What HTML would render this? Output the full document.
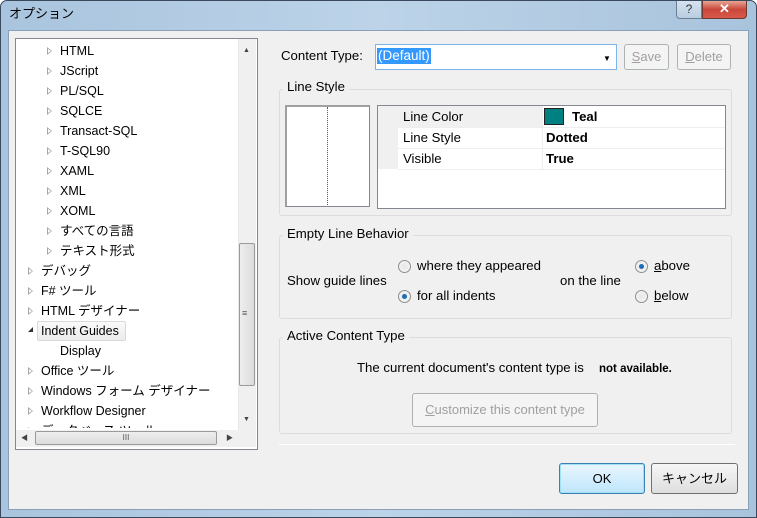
<!DOCTYPE html>
<html><head><meta charset="utf-8"><style>
*{box-sizing:border-box;margin:0;padding:0}
body{width:757px;height:518px;overflow:hidden;background:#fff;font-family:"Liberation Sans","Noto Sans CJK JP",sans-serif;font-size:12px;color:#000;position:relative}
.a{position:absolute}
.frame{left:0;top:0;width:757px;height:518px;border:1px solid #3a4a5c;border-radius:7px 7px 0 0;background:linear-gradient(90deg,#a9c4de,#bcd3e8 50%,#a8c3dc)}
.client{left:8px;top:30px;width:741px;height:480px;background:#f0f0f0;border:1px solid #8aa0b8}
.t{white-space:nowrap;line-height:14px}
.r{font-size:13.2px}
.grp{border:1px solid #dcdcdc;border-radius:3px}
.lbl{background:#f0f0f0;padding:0 4px}
.btn{border:1px solid #707070;border-radius:3px;background:linear-gradient(#f6f6f6,#dedede);text-align:center;font-size:13px}
.dis{border:1px solid #adb2b5;border-radius:3px;background:#f4f4f4;color:#a0a0a0;text-align:center;font-size:13px}
.rad{width:13px;height:13px;border-radius:50%;border:1px solid #8e8f8f;background:radial-gradient(#e6e6e6,#f8f8f8)}
.rad.on::after{content:"";position:absolute;left:3px;top:3px;width:5px;height:5px;border-radius:50%;background:#1d6db5}
</style></head><body>
<div class="a frame"></div>
<div class="a t" style="left:9px;top:7px;font-size:13px">オプション</div>
<div class="a" style="left:676px;top:1px;width:26px;height:18px;border:1px solid #6b7f95;border-top:0;border-radius:0 0 0 4px;background:linear-gradient(#d6e3f0,#b9cde2);text-align:center;font-size:12px;color:#333;line-height:16px">?</div>
<div class="a" style="left:702px;top:1px;width:45px;height:18px;border:1px solid #6b3a30;border-top:0;border-radius:0 0 4px 0;background:linear-gradient(#e8a595,#c8473a 50%,#d8594a);text-align:center;color:#fff;font-weight:bold;font-size:13px;line-height:16px">✕</div>
<div class="a client"></div>

<!-- tree -->
<div class="a" style="left:15px;top:38px;width:243px;height:412px;border:1px solid #828790;background:#fff"></div>
<div id="tree"></div>
<div class="a" style="left:238px;top:39px;width:18px;height:391px;background:#f0f0f0;border-left:1px solid #e8e8e8"></div>
<div class="a" style="left:239px;top:243px;width:16px;height:143px;border:1px solid #9a9a9a;border-radius:2px;background:linear-gradient(90deg,#eee,#dcdcdc)"></div>
<div class="a t" style="left:242px;top:306px;font-size:9px;color:#555">≡</div>
<div class="a t" style="left:243px;top:44px;font-size:7px;color:#444">▲</div>
<div class="a t" style="left:243px;top:413px;font-size:7px;color:#444">▼</div>

<!-- content type -->
<div class="a t r" style="left:281px;top:49px">Content Type:</div>
<div class="a" style="left:375px;top:44px;width:242px;height:26px;border:1px solid #7eb4ea;background:#fff"></div>
<div class="a t" style="left:377px;top:48px;background:#3399ff;color:#fff;padding:0 1px;font-size:13.5px;line-height:16px">(Default)</div>
<div class="a t" style="left:603px;top:52px;font-size:8px">▼</div>
<div class="a dis" style="left:624px;top:44px;width:45px;height:26px;line-height:24px"><u>S</u>ave</div>
<div class="a dis" style="left:677px;top:44px;width:54px;height:26px;line-height:24px"><u>D</u>elete</div>

<!-- line style -->
<div class="a grp" style="left:279px;top:89px;width:453px;height:127px"></div>
<div class="a t lbl r" style="left:283px;top:80px">Line Style</div>
<div class="a" style="left:285px;top:105px;width:85px;height:102px;border:1px solid #828790;border-top:2px solid #a0a0a0;border-left:2px solid #a0a0a0;background:#fff"></div>
<div class="a" style="left:327px;top:107px;width:0;height:98px;border-left:1px dotted #008080"></div>
<div class="a" style="left:377px;top:105px;width:349px;height:104px;border:1px solid #828790;background:#fff"></div>
<div class="a" style="left:378px;top:106px;width:20px;height:63px;background:#f0f0f0"></div>
<div class="a" style="left:398px;top:106px;width:144px;height:21px;background:#f0f0f0"></div>
<div class="a" style="left:398px;top:127px;width:327px;height:1px;background:#eee"></div>
<div class="a" style="left:398px;top:148px;width:327px;height:1px;background:#eee"></div>
<div class="a" style="left:398px;top:169px;width:327px;height:1px;background:#eee"></div>
<div class="a" style="left:542px;top:106px;width:1px;height:63px;background:#eee"></div>
<div class="a t r" style="left:403px;top:110px">Line Color</div>
<div class="a t r" style="left:403px;top:131px">Line Style</div>
<div class="a t r" style="left:403px;top:152px">Visible</div>
<div class="a" style="left:544px;top:108px;width:20px;height:17px;background:#008080;border:1px solid #222"></div>
<div class="a t r" style="left:572px;top:110px;font-weight:bold">Teal</div>
<div class="a t r" style="left:546px;top:131px;font-weight:bold">Dotted</div>
<div class="a t r" style="left:546px;top:152px;font-weight:bold">True</div>

<!-- empty line -->
<div class="a grp" style="left:279px;top:235px;width:453px;height:84px"></div>
<div class="a t lbl r" style="left:283px;top:227px">Empty Line Behavior</div>
<div class="a t r" style="left:287px;top:274px">Show guide lines</div>
<div class="a rad" style="left:398px;top:260px"></div>
<div class="a rad on" style="left:398px;top:290px"></div>
<div class="a t r" style="left:417px;top:259px">where they appeared</div>
<div class="a t r" style="left:417px;top:289px">for all indents</div>
<div class="a t r" style="left:560px;top:274px">on the line</div>
<div class="a rad on" style="left:635px;top:260px"></div>
<div class="a rad" style="left:635px;top:290px"></div>
<div class="a t r" style="left:654px;top:259px"><u>a</u>bove</div>
<div class="a t r" style="left:654px;top:289px"><u>b</u>elow</div>

<!-- active -->
<div class="a grp" style="left:279px;top:337px;width:453px;height:97px"></div>
<div class="a t lbl r" style="left:283px;top:329px">Active Content Type</div>
<div class="a t r" style="left:357px;top:361px">The current document's content type is</div>
<div class="a t" style="left:599px;top:362px;font-weight:bold;font-size:11.5px">not available.</div>
<div class="a dis" style="left:412px;top:393px;width:186px;height:34px;line-height:32px"><u>C</u>ustomize this content type</div>

<div class="a" style="left:279px;top:444px;width:456px;height:1px;background:#a0a0a0;border-bottom:1px solid #fff"></div>
<div class="a btn" style="left:559px;top:463px;width:86px;height:31px;line-height:29px;border-color:#3c7fb1;box-shadow:inset 0 0 0 1px #9ee2f8;background:linear-gradient(#eaf6fd,#bee6fd)">OK</div>
<div class="a btn" style="left:651px;top:463px;width:87px;height:31px;line-height:29px">キャンセル</div>

<script>
var items=[["HTML",1],["JScript",1],["PL/SQL",1],["SQLCE",1],["Transact-SQL",1],["T-SQL90",1],["XAML",1],["XML",1],["XOML",1],["すべての言語",1],["テキスト形式",1],["デバッグ",0],["F# ツール",0],["HTML デザイナー",0],["Indent Guides",2],["Display",3],["Office ツール",0],["Windows フォーム デザイナー",0],["Workflow Designer",0],["データベース ツール",0]];
var h="";
items.forEach(function(it,i){var y=44+i*20;var lv=it[1];
var tx=(lv==1||lv==3)?60:41;var ax=(lv==1)?47:28;
if(lv==2){h+='<div class="a" style="left:37px;top:'+(y-3)+'px;width:89px;height:20px;border:1px solid #d9d9d9;border-radius:2px;background:linear-gradient(#fafafa,#ececec)"></div>';
h+='<div class="a" style="left:28px;top:'+(y+3)+'px;width:0;height:0;border-right:5px solid #333;border-top:5px solid transparent"></div>';}
else if(lv!=3){h+='<div class="a" style="left:'+ax+'px;top:'+(y+3)+'px;width:0;height:0;border-left:5px solid #a6a6a6;border-top:4px solid transparent;border-bottom:4px solid transparent"></div><div class="a" style="left:'+(ax+1)+'px;top:'+(y+5)+'px;width:0;height:0;border-left:3px solid #fff;border-top:2px solid transparent;border-bottom:2px solid transparent"></div>';}
h+='<div class="a t" style="left:'+tx+'px;top:'+y+'px;font-size:12.5px">'+it[0]+'</div>';});
document.getElementById("tree").innerHTML=h;
</script>
<div class="a" style="left:16px;top:428px;width:222px;height:2px;background:#fff"></div>
<div class="a" style="left:16px;top:430px;width:240px;height:17px;background:#f0f0f0"></div>
<div class="a" style="left:35px;top:431px;width:182px;height:14px;border:1px solid #9a9a9a;border-radius:2px;background:linear-gradient(#eee,#dcdcdc);text-align:center;font-size:8px;line-height:12px;color:#555">III</div>
<div class="a t" style="left:21px;top:432px;font-size:7px;color:#444">◀</div>
<div class="a t" style="left:226px;top:432px;font-size:7px;color:#444">▶</div>
</body></html>
